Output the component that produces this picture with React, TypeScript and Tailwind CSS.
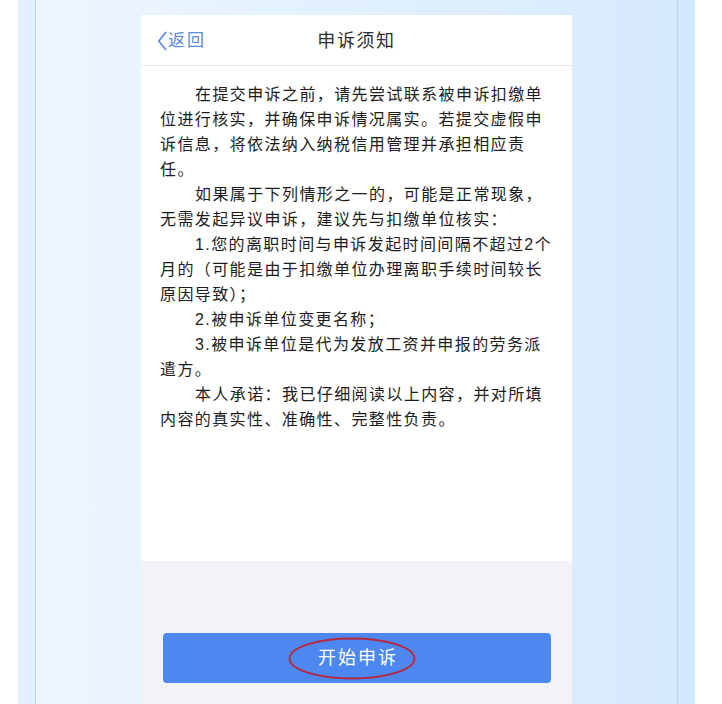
import React from "react";

const lines: { t: string; indent?: boolean }[] = [
  { t: "在提交申诉之前，请先尝试联系被申诉扣缴单", indent: true },
  { t: "位进行核实，并确保申诉情况属实。若提交虚假申" },
  { t: "诉信息，将依法纳入纳税信用管理并承担相应责" },
  { t: "任。" },
  { t: "如果属于下列情形之一的，可能是正常现象，", indent: true },
  { t: "无需发起异议申诉，建议先与扣缴单位核实：" },
  { t: "1.您的离职时间与申诉发起时间间隔不超过2个", indent: true },
  { t: "月的（可能是由于扣缴单位办理离职手续时间较长" },
  { t: "原因导致）；" },
  { t: "2.被申诉单位变更名称；", indent: true },
  { t: "3.被申诉单位是代为发放工资并申报的劳务派", indent: true },
  { t: "遣方。" },
  { t: "本人承诺：我已仔细阅读以上内容，并对所填", indent: true },
  { t: "内容的真实性、准确性、完整性负责。" },
];

export default function App() {
  return (
    <div
      className="flex h-[704px] w-[722px] overflow-hidden bg-white"
      style={{ fontFamily: '"Liberation Sans", "Noto Sans CJK SC", sans-serif' }}
    >
      <div className="w-[18px] shrink-0 bg-white" />
      <div className="w-[18px] shrink-0 border-r border-[#b8daf9] bg-[#e3f1fe]" />
      <div className="flex w-[641px] shrink-0 justify-center bg-linear-to-r from-[#edf6ff] to-[#d6eafd] pt-[15px]">
        <div className="flex h-full w-[431px] flex-col bg-white">
          <div className="grid h-[51px] shrink-0 grid-cols-[1fr_auto_1fr] items-center border-b border-[#e6e6e8]">
            <div className="flex items-center pl-[16px] pt-[2px] text-[17px] tracking-[2px] text-[#5a8bd8]">
              <svg width="10" height="20" viewBox="0 0 10 20" className="mr-[1px]">
                <polyline points="8.6,1.5 1.8,10 8.6,18.5" fill="none" stroke="#5a8bd8" strokeWidth="1.7" strokeLinecap="round" strokeLinejoin="round" />
              </svg>
              <span>返回</span>
            </div>
            <div className="pt-[3px] text-[18px] tracking-[1.6px] text-[#2e2e2e]">申诉须知</div>
            <div />
          </div>
          <div className="flex-1 bg-white pl-[19px] pr-[10px] pt-[16px] text-[16px] leading-[25px] tracking-[1.4px] text-[#1c1c1c]">
            {lines.map((l, i) => (
              <div key={i} className={"whitespace-nowrap " + (l.indent ? "pl-[35px]" : "")}>
                {l.t}
              </div>
            ))}
          </div>
          <div className="h-[143px] shrink-0 bg-[#f2f3f7] px-[22px] pt-[72px]">
            <div className="relative flex h-[50px] w-[388px] items-center justify-center rounded-[4px] bg-[#4d87f0] text-[18px] tracking-[2px] text-white">
              <span className="pl-[2px]">开始申诉</span>
              <svg className="absolute left-[125px] top-[4px]" width="128" height="43" viewBox="0 0 128 43">
                <ellipse cx="64" cy="21.5" rx="62.5" ry="20" fill="none" stroke="#b9283e" strokeWidth="2" />
              </svg>
            </div>
          </div>
        </div>
      </div>
      <div className="w-[18px] shrink-0 border-l border-[#b4d7f8] bg-[#d2e8fd]" />
      <div className="w-[27px] shrink-0 bg-white" />
    </div>
  );
}
